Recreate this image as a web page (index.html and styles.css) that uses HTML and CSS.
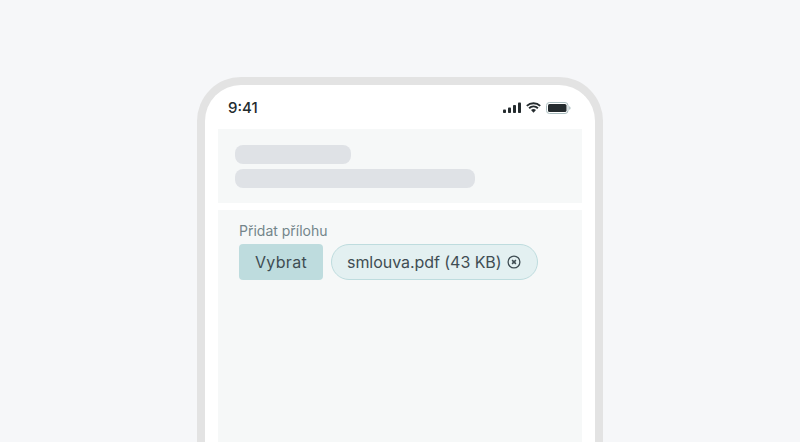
FILE: index.html
```html
<!DOCTYPE html>
<html lang="en">
<head>
  <meta charset="UTF-8">
  <meta name="viewport" content="width=device-width, initial-scale=1.0">
  <title>Přidat přílohu</title>
  <link rel="stylesheet" href="styles.css">
</head>
<body>
  <div class="phone">
    <div class="status-bar">
      <span class="time">9:41</span>
      <div class="status-icons">
        <svg width="18" height="11" viewBox="0 0 18 11">
          <rect x="0" y="7.5" width="3" height="3.5" rx="0.8" fill="#242b2e"/>
          <rect x="5" y="5.5" width="3" height="5.5" rx="0.8" fill="#242b2e"/>
          <rect x="10" y="3" width="3" height="8" rx="0.8" fill="#242b2e"/>
          <rect x="15" y="0.5" width="3" height="10.5" rx="0.8" fill="#242b2e"/>
        </svg>
        <svg width="15" height="11" viewBox="0 0 15 11">
          <path d="M.8 3.9a9.6 9.6 0 0 1 13.4 0M3.1 6.2a6.3 6.3 0 0 1 8.8 0" fill="none" stroke="#242b2e" stroke-width="1.9"/>
          <path d="M5 8.1a3.6 3.6 0 0 1 5 0L7.5 10.8z" fill="#242b2e"/>
        </svg>
        <svg width="25" height="12" viewBox="0 0 25 12">
          <rect x="0.5" y="0.5" width="21.5" height="11" rx="3" fill="none" stroke="#a9bcbe"/>
          <rect x="2" y="2" width="18.5" height="8" rx="1.6" fill="#242b2e"/>
          <path d="M23.2 4.2c.9.2 1.3.9 1.3 1.8s-.4 1.6-1.3 1.8z" fill="#a9bcbe"/>
        </svg>
      </div>
    </div>
    <div class="panel panel-top">
      <div class="skeleton skeleton-short"></div>
      <div class="skeleton skeleton-long"></div>
    </div>
    <div class="panel panel-main">
      <label class="field-label">Přidat přílohu</label>
      <div class="upload-row">
        <button class="pick-button" type="button">Vybrat</button>
        <div class="file-chip">
          <span>smlouva.pdf (43 KB)</span>
          <svg class="chip-remove" width="14" height="14" viewBox="0 0 14 14">
            <circle cx="7" cy="7" r="5.9" fill="none" stroke="#3f4d53" stroke-width="1.3"/>
            <path d="M5.1 5.1l3.8 3.8M8.9 5.1l-3.8 3.8" fill="none" stroke="#3f4d53" stroke-width="1.5"/>
          </svg>
        </div>
      </div>
    </div>
  </div>
</body>
</html>
```

FILE: styles.css
```css
html, body {
  height: 100%;
}
body {
  margin: 0;
  background: #f6f7f9;
  font-family: 'Inter', 'Liberation Sans', sans-serif;
  overflow: hidden;
  display: flex;
  justify-content: center;
  padding-top: 77px;
  box-sizing: border-box;
}
.phone {
  width: 406px;
  flex-shrink: 0;
  box-sizing: border-box;
  display: flex;
  flex-direction: column;
  border: 8px solid #e3e3e3;
  border-bottom: none;
  border-radius: 44px 44px 0 0;
  background: #fff;
  padding: 0 13px;
}
.status-bar {
  height: 44px;
  display: flex;
  justify-content: space-between;
  align-items: center;
  padding: 1px 11px 0 10px;
  box-sizing: border-box;
}
.time {
  font-size: 15px;
  font-weight: 500;
  color: #242b2e;
}
.status-icons {
  display: flex;
  align-items: center;
  gap: 5px;
}
.status-icons svg {
  display: block;
}
.panel {
  background: #f6f8f8;
}
.panel-top {
  height: 74px;
  box-sizing: border-box;
  padding: 16px 17px;
  margin-bottom: 7px;
}
.skeleton {
  height: 19px;
  border-radius: 8px;
  background: #dfe2e6;
}
.skeleton-short {
  width: 116px;
  margin-bottom: 5px;
}
.skeleton-long {
  width: 240px;
}
.panel-main {
  flex: 1;
  box-sizing: border-box;
  padding: 12px 21px;
}
.field-label {
  display: block;
  font-size: 14px;
  line-height: 18px;
  color: #73858a;
  margin-bottom: 4px;
}
.upload-row {
  display: flex;
  gap: 8px;
}
.pick-button {
  width: 84px;
  height: 36px;
  border: none;
  border-radius: 4px;
  background: #bedcde;
  color: #3f4d53;
  font-family: inherit;
  font-size: 16px;
  font-weight: 400;
  letter-spacing: 0.3px;
  padding: 0;
}
.file-chip {
  height: 36px;
  box-sizing: border-box;
  display: flex;
  align-items: center;
  gap: 5px;
  padding: 0 16px 0 15px;
  border: 1px solid #bedcde;
  border-radius: 18px;
  background: #e3f0f1;
  color: #3f4d53;
  font-size: 16px;
  letter-spacing: -0.05px;
}
.chip-remove {
  display: block;
}
```
